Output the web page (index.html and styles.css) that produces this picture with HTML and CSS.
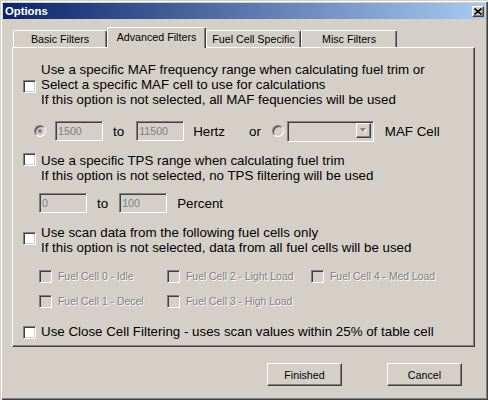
FILE: index.html
```html
<!DOCTYPE html>
<html lang="en">
<head>
    <meta charset="UTF-8">
    <title>Options</title>
    <link rel="stylesheet" href="styles.css">
</head>
<body>
    <div class="window">
        <div class="titlebar">
            <span class="title">Options</span>
            <span class="close">
                <svg width="8" height="7" viewBox="0 0 8 7">
                    <path d="M0.5 0.5 L7.5 6.5 M7.5 0.5 L0.5 6.5" stroke="#000" stroke-width="1.6" fill="none"/>
                </svg>
            </span>
        </div>

        <!-- Tab strip -->
        <div class="tabs">
            <div class="tab tab-basic">Basic Filters</div>
            <div class="tab tab-adv active">Advanced Filters</div>
            <div class="tab tab-fuel">Fuel Cell Specific</div>
            <div class="tab tab-misc">Misc Filters</div>
        </div>

        <div class="panel">
            <!-- MAF -->
            <div class="option opt-maf">
                <span class="check"></span>
                <div class="label">
                    Use a specific MAF frequency range when calculating fuel trim or<br>
                    Select a specific MAF cell to use for calculations<br>
                    If this option is not selected, all MAF fequencies will be used
                </div>
            </div>
            <div class="range range-maf">
                <span class="radio selected"></span>
                <span class="field">1500</span>
                <span class="word to">to</span>
                <span class="field f2">11500</span>
                <span class="word hertz">Hertz</span>
                <span class="word or">or</span>
                <span class="radio r2"></span>
                <span class="combo"><span class="combo-btn"><span class="arrow"></span></span></span>
                <span class="word maf-cell">MAF Cell</span>
            </div>

            <!-- TPS -->
            <div class="option opt-tps">
                <span class="check"></span>
                <div class="label">
                    Use a specific TPS range when calculating fuel trim<br>
                    If this option is not selected, no TPS filtering will be used
                </div>
            </div>
            <div class="range range-tps">
                <span class="field">0</span>
                <span class="word to">to</span>
                <span class="field f2">100</span>
                <span class="word pct">Percent</span>
            </div>

            <!-- Fuel cells -->
            <div class="option opt-cells">
                <span class="check"></span>
                <div class="label">
                    Use scan data from the following fuel cells only<br>
                    If this option is not selected, data from all fuel cells will be used
                </div>
            </div>
            <div class="cells">
                <div class="cell"><span class="check off"></span>Fuel Cell 0 - Idle</div>
                <div class="cell"><span class="check off"></span>Fuel Cell 2 - Light Load</div>
                <div class="cell"><span class="check off"></span>Fuel Cell 4 - Med Load</div>
                <div class="cell"><span class="check off"></span>Fuel Cell 1 - Decel</div>
                <div class="cell"><span class="check off"></span>Fuel Cell 3 - High Load</div>
            </div>

            <div class="option opt-close">
                <span class="check"></span>
                <div class="label">Use Close Cell Filtering - uses scan values within 25% of table cell</div>
            </div>
        </div>

        <div class="buttons">
            <button class="btn">Finished</button>
            <button class="btn">Cancel</button>
        </div>
    </div>
</body>
</html>
```

FILE: styles.css
```css
body {
    margin: 0;
    font-family: "Liberation Sans", Arial, sans-serif;
    background-color: #d4d0c8;
}
.window {
    width: 488px;
    height: 400px;
    box-sizing: border-box;
    padding: 3px;
    background-color: #d4d0c8;
    box-shadow: inset 1px 1px #d4d0c8, inset 2px 2px #fff, inset -1px -1px #404040, inset -2px -2px #808080;
}
.titlebar {
    height: 16px;
    display: flex;
    align-items: center;
    justify-content: space-between;
    padding: 0 1px 0 2px;
    background: linear-gradient(to right, #0a246a, #a6caf0);
}
.title {
    color: #fff;
    font-weight: bold;
    font-size: 11.3px;
}
.close {
    width: 12px;
    height: 11px;
    box-sizing: border-box;
    display: flex;
    align-items: center;
    justify-content: center;
    background-color: #d4d0c8;
    border: 1px solid;
    border-color: #fff #404040 #404040 #fff;
    box-shadow: inset -1px -1px #808080;
}
.close svg {
    display: block;
}

/* tabs */
.tabs {
    height: 28px;
    display: flex;
    align-items: flex-end;
    padding-left: 10px;
}
.tab {
    height: 17px;
    box-sizing: border-box;
    display: flex;
    align-items: center;
    justify-content: center;
    font-size: 10.7px;
    color: #000;
    border: 1px solid;
    border-bottom: none;
    border-color: #fff #404040 #fff #fff;
    border-radius: 2px 2px 0 0;
    box-shadow: inset -1px 0 #808080;
}
.tab-basic { width: 94px; }
.tab-adv { width: 99px; }
.tab-fuel { width: 95px; }
.tab-misc { width: 96px; }
.tab.active {
    height: 21px;
    margin-bottom: -1px;
    padding-bottom: 3px;
    position: relative;
    z-index: 1;
    background-color: #d4d0c8;
}

/* panel */
.panel {
    width: 463px;
    height: 300px;
    box-sizing: border-box;
    margin-left: 9px;
    padding-top: 14px;
    border: 1px solid;
    border-color: #fff #404040 #404040 #fff;
    box-shadow: inset -1px -1px #808080;
    font-size: 13.33px;
    color: #000;
}
.option {
    display: flex;
    align-items: flex-start;
    gap: 5px;
    padding-left: 10px;
}
.label {
    line-height: 15px;
}
.check {
    flex: none;
    width: 13px;
    height: 13px;
    box-sizing: border-box;
    background-color: #fff;
    border: 1px solid;
    border-color: #808080 #fff #fff #808080;
    box-shadow: inset 1px 1px #404040, inset -1px -1px #d4d0c8;
}
.check.off {
    background-color: #d4d0c8;
}
.opt-maf .check { margin-top: 18px; }
.opt-tps { margin-top: 12px; }
.opt-tps .check { margin-top: 0; }
.opt-cells { margin-top: 12px; }
.opt-cells .check { margin-top: 7px; }
.opt-close { margin-top: 13px; }
.opt-close .check { margin-top: 2px; }

/* value rows */
.range {
    display: flex;
    align-items: center;
    height: 20px;
}
.range-maf {
    margin-top: 14px;
    padding-left: 21px;
}
.range-tps {
    margin-top: 10px;
    padding-left: 26px;
}
.radio {
    flex: none;
    width: 12px;
    height: 12px;
    box-sizing: border-box;
    border-radius: 50%;
    border: 1px solid;
    border-color: #808080 #fff #fff #808080;
    box-shadow: inset 1px 1px #404040;
    background-color: #d4d0c8;
    display: flex;
    align-items: center;
    justify-content: center;
}
.radio.selected::after {
    content: "";
    width: 4px;
    height: 4px;
    border-radius: 50%;
    background-color: #808080;
}
.field {
    width: 48px;
    height: 20px;
    box-sizing: border-box;
    padding-left: 2px;
    display: flex;
    align-items: center;
    font-size: 10.7px;
    color: #808080;
    border: 1px solid;
    border-color: #808080 #fff #fff #808080;
    box-shadow: inset 1px 1px #404040, inset -1px -1px #d4d0c8;
}
.range-maf .field { margin-left: 9px; }
.range-maf .field.f2 { margin-left: 12px; }
.range-tps .field.f2 { margin-left: 11px; }
.word.to { margin-left: 10px; }
.word.hertz { margin-left: 9px; }
.word.or { margin-left: 24px; }
.radio.r2 { margin-left: 11px; }
.word.maf-cell { margin-left: 11px; }
.word.pct { margin-left: 10px; }
.combo {
    margin-left: 3px;
    width: 87px;
    height: 21px;
    box-sizing: border-box;
    display: flex;
    justify-content: flex-end;
    padding: 2px;
    border: 1px solid;
    border-color: #808080 #fff #fff #808080;
    box-shadow: inset 1px 1px #404040, inset -1px -1px #d4d0c8;
}
.combo-btn {
    width: 15px;
    height: 15px;
    box-sizing: border-box;
    display: flex;
    align-items: center;
    justify-content: center;
    border: 1px solid;
    border-color: #fff #404040 #404040 #fff;
    box-shadow: inset -1px -1px #808080;
    margin-top: -1px;
}
.arrow {
    width: 0;
    height: 0;
    border-left: 3.5px solid transparent;
    border-right: 3.5px solid transparent;
    border-top: 4px solid #808080;
    filter: drop-shadow(1px 1px 0 #fff);
}

/* fuel cells */
.cells {
    margin-top: 11px;
    padding-left: 26px;
    display: grid;
    grid-template-columns: 128px 144px auto;
    grid-auto-rows: 20px;
    row-gap: 5px;
}
.cell {
    display: flex;
    align-items: center;
    gap: 6px;
    font-size: 10.4px;
    color: #808080;
    text-shadow: 1px 1px 0 #fff;
}

/* buttons */
.buttons {
    display: flex;
    justify-content: flex-end;
    gap: 45px;
    margin-top: 16px;
    padding-right: 23px;
}
.btn {
    width: 75px;
    height: 23px;
    padding: 0;
    font-family: "Liberation Sans", Arial, sans-serif;
    font-size: 10.7px;
    color: #000;
    background-color: #d4d0c8;
    border: 1px solid;
    border-color: #fff #404040 #404040 #fff;
    box-shadow: inset -1px -1px #808080;
}
```
